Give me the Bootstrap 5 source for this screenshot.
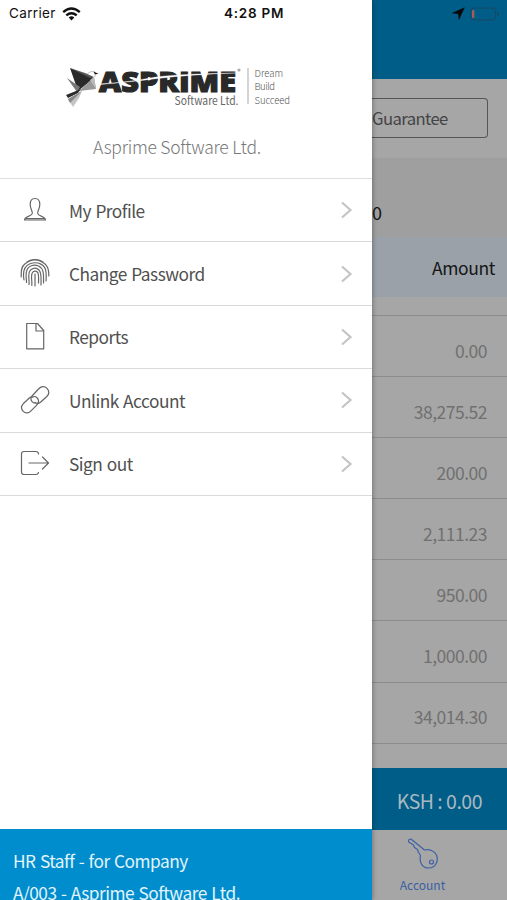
<!DOCTYPE html>
<html lang="en">
<head>
<meta charset="utf-8">
<meta name="viewport" content="width=device-width, initial-scale=1">
<title>Asprime</title>
<link href="https://cdn.jsdelivr.net/npm/bootstrap@5.3.0/dist/css/bootstrap.min.css" rel="stylesheet">
<style>
body{font-family:"Noto Sans CJK SC","Open Sans",sans-serif;background:#a6a6a6;overflow:hidden}
.app{width:507px;height:900px;line-height:1}
.statusbar{height:27px;top:0;left:0;right:0;z-index:5;font-family:Inter,sans-serif;color:#111}
.carrier{font-size:13.5px;letter-spacing:.35px}
.clock{font-size:13.5px;font-weight:600;letter-spacing:.75px;left:224px;top:7px}
.drawer{width:372px;flex:none;background:#fff;z-index:2;box-shadow:0 0 5px rgba(0,0,0,.4)}
.brand-head{height:179px;border-bottom:1px solid #dedede;padding:62px 18px 0 0}
.company{font-size:17.5px;letter-spacing:-.25px;font-weight:300;color:#777;margin-top:26px}
.menu-row{height:63.4px;border-bottom:1px solid #dadada;color:#505050;font-size:17.3px;letter-spacing:-.5px;word-spacing:1px;padding:0 19px 0 20px}
.menu-row .ico{width:30px;height:30px;flex:none;margin-right:19px}
.ico,.chev,.key{fill:none;stroke:#666;stroke-width:1.2;stroke-linecap:round;stroke-linejoin:round}
.chev{stroke:#c4c4c4;stroke-width:2.2;stroke-linecap:butt;stroke-linejoin:miter}
.userbar{height:71px;background:#008dcd;color:#e3f4fc;font-size:17.3px;letter-spacing:-.5px;word-spacing:1px;padding:16px 13px 0;line-height:32px}
.pane{background:#a6a6a6;min-width:0}
.topbar{height:79px;background:#005d87}
.actions{height:79px;padding-top:19px}
.guar{width:116px;height:40px;border:1.5px solid #555;border-left:0;border-radius:0 4px 4px 0;color:#444;font-size:16.7px;letter-spacing:-.6px}
.balance{height:79px;background:#9f9f9f;color:#151515;font-size:18px;padding-top:45px}
.thead-row{height:60px;background:#9aa1a9;color:#151515;font-size:17.5px;letter-spacing:-.4px;padding:2px 12px 0 0}
.spacer-row{height:19px;border-bottom:1px solid #8c8c8c}
.amt{height:61.1px;border-bottom:1px solid #8c8c8c;color:#707070;font-size:17.5px;letter-spacing:-.5px;padding:9px 20px 0 0}
.total{height:62px;background:#005d87;color:#a9b9c1;font-size:19.5px;letter-spacing:-.5px;padding:3px 25px 0 0}
.tabbar{height:70px}
.tab{width:101px;color:#3b5fa3;font-size:12px}
.tab span{margin-top:9px}
.key{stroke:#3e61a5}
</style>
</head>
<body>
<div class="app d-flex position-relative overflow-hidden">
  <div class="statusbar position-absolute">
    <div class="d-flex align-items-center h-100" style="padding:0 8px 0 9px">
      <span class="carrier">Carrier</span>
      <svg width="19" height="14" viewBox="0 0 19 14" fill="none" stroke="#111" stroke-width="2.4" style="margin-left:6px"><path d="M1.2 5.1Q9.5-2 17.8 5.1M4.3 8.3Q9.5 4 14.7 8.3"/><path d="M6.7 10.4Q9.5 8.2 12.3 10.4L9.5 13.5Z" fill="#111" stroke="none"/></svg>
      <svg class="ms-auto me-1" width="13" height="13" viewBox="0 0 13 13"><path d="M12.3.8 7 12.2 6.4 6.7.7 6.1Z" fill="#080808" stroke="#080808" stroke-width=".5"/></svg>
      <svg width="30" height="14" viewBox="0 0 30 14"><rect x="1.6" y="1.1" width="25" height="11.8" rx="3" fill="none" stroke="#174863"/><path d="M28 4.8v4.4q1.8-.6 1.8-2.2T28 4.8" fill="#174863"/><rect x="3" y="3" width="2.4" height="8" rx="1" fill="#a65d59"/></svg>
    </div>
    <span class="clock position-absolute text-nowrap">4:28 PM</span>
  </div>

  <aside class="drawer d-flex flex-column">
    <header class="brand-head d-flex flex-column align-items-center">
      <svg width="232" height="50" viewBox="61 62 232 50">
        <path d="M70 68 94 78 78 91Z" fill="#292929"/><path d="M70 68 85 73 94 77 90 78Z" fill="#555"/>
        <path d="M67 78 80 87 77 92Z" fill="#777"/><path d="M94 77 96 89 79 91Z" fill="#999"/><path d="M90 80 94 77 96 89Z" fill="#bbb"/>
        <path d="M81 89 66 95 68 98 78 93Z" fill="#2b2b2b"/><path d="M82 91 68 99 73 107 79 98Z" fill="#c4c4c4"/>
        <path d="M68 99 82 91 70 103Z" fill="#888"/><path d="M87 74Q91 70 95 72L95 77" fill="none" stroke="#aaa" stroke-width=".7"/><path d="M93.500 71.500 98.500 73.800 95 74.500Z" fill="#222"/>
        <text x="99" y="92" textLength="137" lengthAdjust="spacingAndGlyphs" font-family="Open Sans,sans-serif" font-weight="800" font-size="28.500" fill="#292929" stroke="#292929" stroke-width="1.2">ASPRIME</text>
        <path d="M98 84Q130 82 150 78T236 73Q190 74.500 158 78.500T98 84.800Z" fill="#fff" stroke="#fff" stroke-width=".3"/>
        <circle cx="239" cy="70" r="1.600" fill="#aaa"/>
        <text x="174.500" y="104.500" textLength="64" lengthAdjust="spacingAndGlyphs" font-size="11.500" fill="#666">Software Ltd.</text>
        <path d="M248 68v36" stroke="#aaa"/>
        <g font-size="9.500" font-weight="300" fill="#555"><text x="254.500" y="77" textLength="28.500">Dream</text><text x="254.500" y="90" textLength="20.500">Build</text><text x="254.500" y="103.500" textLength="35.500">Succeed</text></g>
      </svg>
      <div class="company">Asprime Software Ltd.</div>
    </header>
    <nav class="flex-grow-1">
      <div class="menu-row d-flex align-items-center"><svg class="ico" viewBox="0 0 30 30"><path d="M12.300 18.500C12.800 16.500 10.200 14 10.200 9.500C10.200 5.500 11.500 3.500 15 3.500S19.800 5.500 19.800 9.500C19.800 14 17.200 16.500 17.700 18.500C18.200 21.500 25 20.800 25.500 25H4.500C5 20.800 11.800 21.500 12.300 18.500Z"/><path d="M5.500 23.700h19"/></svg><span>My Profile</span><svg class="chev ms-auto" width="13" height="18" viewBox="0 0 13 18"><path d="M2 1.500 10.500 9 2 16.500"/></svg></div>
      <div class="menu-row d-flex align-items-center"><svg class="ico" viewBox="0 0 30 30"><path d="M7 3Q15-2 23 3M1.200 18C1 11 1.500 7.500 4.800 5Q15-3 25 5C28.500 8 29 12 28.800 17M4 21C2.500 13 3.500 7.500 10 4.800C18 1.800 25.500 6 26 13C26.300 17 26.200 20 26 22M6.500 23.500C6.500 20 5.500 16 6.500 12.500C8 6.500 14 5 18.500 7C24 9.500 23.700 15 23.500 24M9 25.500C9.500 21 7.800 16 9.500 12.500C11 9 16 8 19 11C21.800 14 21 19 21 26M11.800 26.500C12.300 22 10.500 16.500 12.300 13.800C13.500 11.500 17 11.500 18 14C19 17 18.500 22 18.500 24M15 27V15"/></svg><span>Change Password</span><svg class="chev ms-auto" width="13" height="18" viewBox="0 0 13 18"><path d="M2 1.500 10.500 9 2 16.500"/></svg></div>
      <div class="menu-row d-flex align-items-center"><svg class="ico" viewBox="0 0 30 30"><path d="M6.700 1.500H17.500L23.700 8.500V26.800H6.700ZM16 1.500V9H23.500"/></svg><span>Reports</span><svg class="chev ms-auto" width="13" height="18" viewBox="0 0 13 18"><path d="M2 1.500 10.500 9 2 16.500"/></svg></div>
      <div class="menu-row d-flex align-items-center"><svg class="ico" viewBox="0 0 30 30"><path d="M17 18C13 19 9 15 12 11L18.500 4C21 1 24.500.8 26.800 3.200C29.500 6 29 9.300 26.800 11.500L20.500 17.300C18.800 18.700 16.500 18.500 15 17.500"/><path d="M12.500 12.200C15.500 10 19.500 14 18.300 17.500Q17.800 19 16 20.800L11 25.800C8.500 28.500 5.300 28.500 3.200 26.400C1 24 1.200 21 3.200 18.800L9.300 13Q11 11.500 13.500 12"/></svg><span>Unlink Account</span><svg class="chev ms-auto" width="13" height="18" viewBox="0 0 13 18"><path d="M2 1.500 10.500 9 2 16.500"/></svg></div>
      <div class="menu-row d-flex align-items-center"><svg class="ico" viewBox="0 0 30 30"><path d="M18.500 5V4.500Q18 2.500 16 2.500H4Q1.500 2.500 1.500 5V23Q1.500 25.500 4 25.500H16Q18 25.500 18.500 23.500M9 14H28M22.500 8 28.500 14 22.500 20"/></svg><span>Sign out</span><svg class="chev ms-auto" width="13" height="18" viewBox="0 0 13 18"><path d="M2 1.500 10.500 9 2 16.500"/></svg></div>
    </nav>
    <footer class="userbar"><div>HR Staff - for Company</div><div>A/003 - Asprime Software Ltd.</div></footer>
  </aside>

  <main class="pane flex-grow-1 d-flex flex-column">
    <div class="topbar"></div>
    <div class="actions"><div class="guar d-flex align-items-center">Guarantee</div></div>
    <div class="balance">0</div>
    <div class="thead-row d-flex align-items-center justify-content-end">Amount</div>
    <div class="spacer-row"></div>
    <div class="amt d-flex align-items-center justify-content-end">0.00</div>
    <div class="amt d-flex align-items-center justify-content-end">38,275.52</div>
    <div class="amt d-flex align-items-center justify-content-end">200.00</div>
    <div class="amt d-flex align-items-center justify-content-end">2,111.23</div>
    <div class="amt d-flex align-items-center justify-content-end">950.00</div>
    <div class="amt d-flex align-items-center justify-content-end">1,000.00</div>
    <div class="amt d-flex align-items-center justify-content-end">34,014.30</div>
    <div class="total mt-auto d-flex align-items-center justify-content-end">KSH : 0.00</div>
    <div class="tabbar"><div class="tab d-flex flex-column align-items-center pt-2"><svg class="key" width="32" height="32" viewBox="0 0 32 32"><path d="M4 1 17.500 12C22 11 27.500 12.500 29.500 17C32 23.500 28 30 22 30C15.500 30 12 25 13.500 17.500L11.500 14.500 10.500 11.500 7.500 9.500 6.500 7 1.800 4Q.8 1 4 1Z"/><circle cx="24.500" cy="24" r="2"/></svg><span>Account</span></div></div>
  </main>
</div>
<script src="https://cdn.jsdelivr.net/npm/bootstrap@5.3.0/dist/js/bootstrap.bundle.min.js"></script>
</body>
</html>
